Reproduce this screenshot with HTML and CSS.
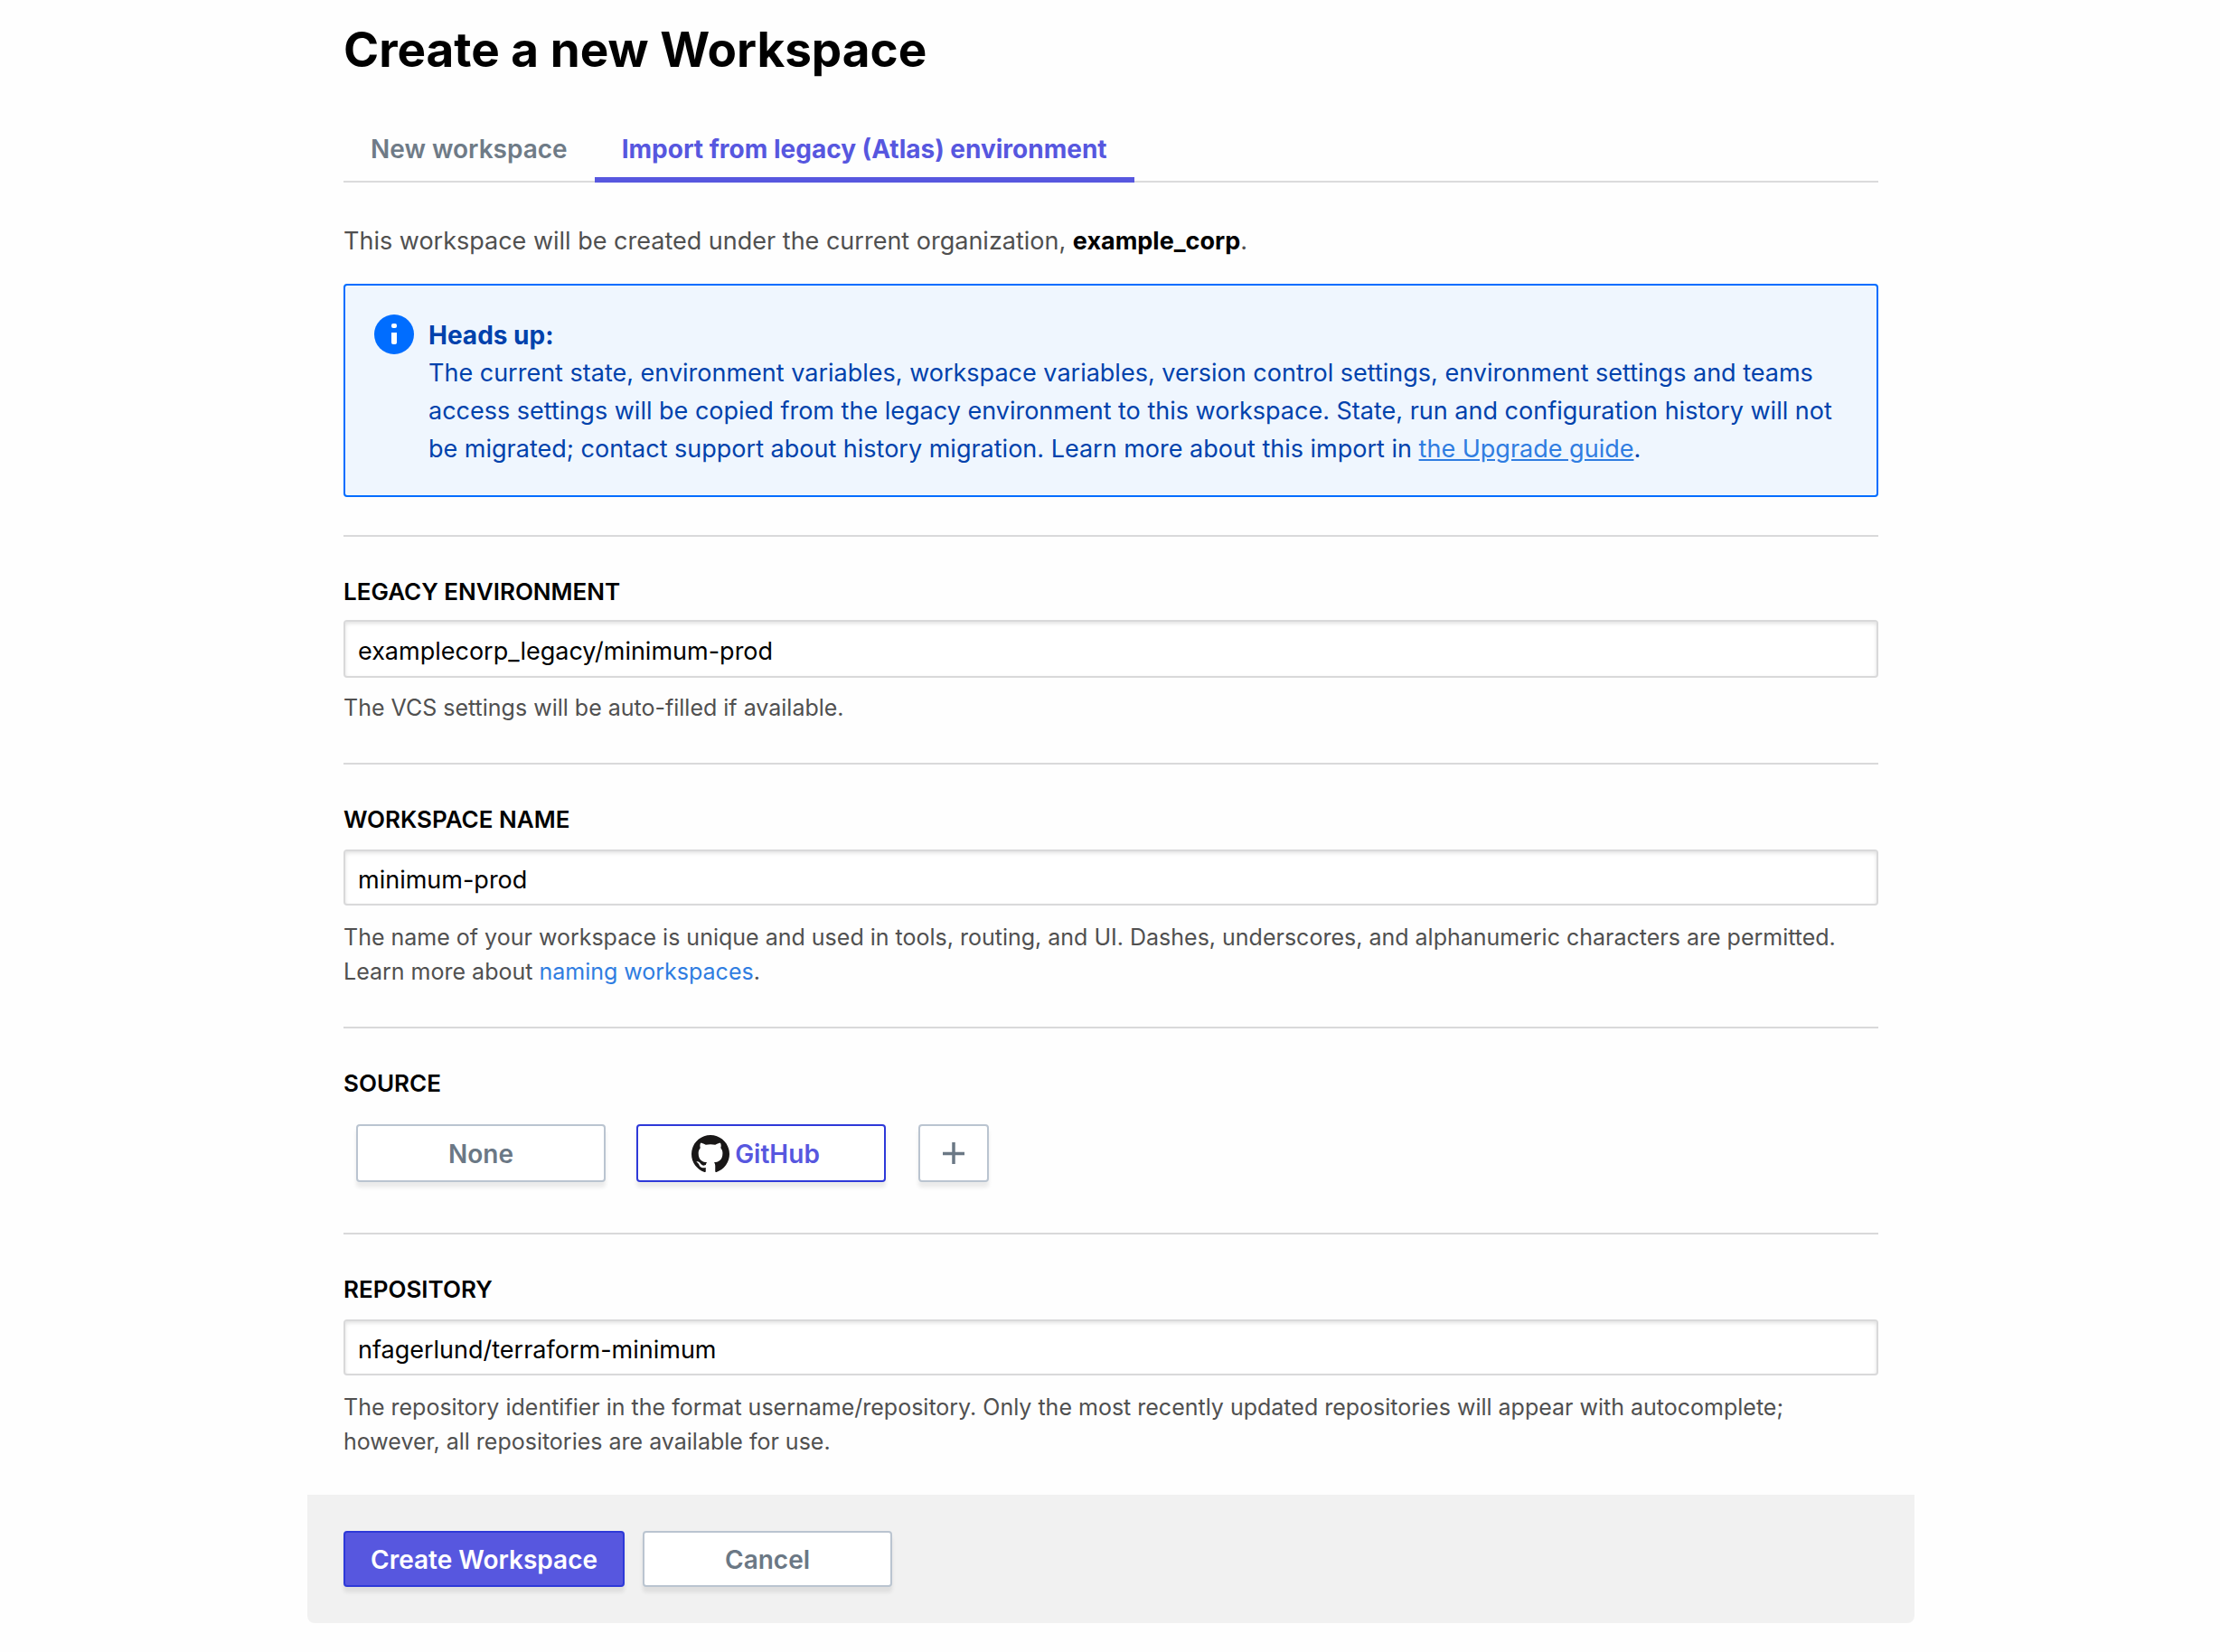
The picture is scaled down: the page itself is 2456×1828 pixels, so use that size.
FILE: index.html
```html
<!DOCTYPE html>
<html lang="en">
<head>
<meta charset="utf-8">
<meta name="viewport" content="width=device-width, initial-scale=1">
<title>Create a new Workspace</title>
<link rel="stylesheet" href="styles.css">
</head>
<body>
<main class="page">
  <h1 class="title">Create a new Workspace</h1>
  <nav class="tabs">
    <a class="tab" href="#new">New workspace</a>
    <a class="tab tab-active" href="#import" aria-current="page">Import from legacy (Atlas) environment</a>
  </nav>
  <p class="intro">This workspace will be created under the current organization, <strong class="org">example_corp</strong>.</p>
  <div class="alert">
    <svg class="alert-icon" viewBox="0 0 44 44" aria-hidden="true">
      <circle cx="22" cy="22" r="22" fill="#006dff"/>
      <rect x="19" y="10" width="6" height="5" rx="2" fill="#fff"/>
      <path d="M19 20h6v11a2 2 0 0 1-2 2h-2a2 2 0 0 1-2-2z" fill="#fff"/>
    </svg>
    <div class="alert-body">
      <strong class="alert-title">Heads up:</strong>
      <p class="alert-text">The current state, environment variables, workspace variables, version control settings, environment settings and teams access settings will be copied from the legacy environment to this workspace. State, run and configuration history will not be migrated; contact support about history migration. Learn more about this import in <a class="link link-underlined" href="#guide">the Upgrade guide</a>.</p>
    </div>
  </div>
  <form class="form">
    <div class="field field-first">
      <label class="label" for="legacy">LEGACY ENVIRONMENT</label>
      <input class="input input-tall" id="legacy" type="text" value="examplecorp_legacy/minimum-prod">
      <p class="help">The VCS settings will be auto-filled if available.</p>
    </div>
    <div class="field">
      <label class="label" for="name">WORKSPACE NAME</label>
      <input class="input" id="name" type="text" value="minimum-prod">
      <p class="help">The name of your workspace is unique and used in tools, routing, and UI. Dashes, underscores, and alphanumeric characters are permitted. Learn more about <a class="link" href="#naming">naming workspaces</a>.</p>
    </div>
    <div class="field field-source" role="group" aria-labelledby="source">
      <span class="label" id="source">SOURCE</span>
      <div class="sources">
        <button class="button button-source" type="button">None</button>
        <button class="button button-source button-selected" type="button">
          <svg class="github" viewBox="0 0 16 16" aria-hidden="true"><path fill="#191717" d="M8 0C3.58 0 0 3.58 0 8c0 3.54 2.29 6.53 5.47 7.59.4.07.55-.17.55-.38 0-.19-.01-.82-.01-1.49-2.01.37-2.53-.49-2.69-.94-.09-.23-.48-.94-.82-1.13-.28-.15-.68-.52-.01-.53.63-.01 1.08.58 1.23.82.72 1.21 1.87.87 2.33.66.07-.52.28-.87.51-1.07-1.78-.2-3.64-.89-3.64-3.95 0-.87.31-1.59.82-2.15-.08-.2-.36-1.02.08-2.12 0 0 .67-.21 2.2.82.64-.18 1.32-.27 2-.27s1.36.09 2 .27c1.53-1.04 2.2-.82 2.2-.82.44 1.1.16 1.92.08 2.12.51.56.82 1.27.82 2.15 0 3.07-1.87 3.75-3.65 3.95.29.25.54.73.54 1.48 0 1.07-.01 1.93-.01 2.2 0 .21.15.46.55.38A8.01 8.01 0 0 0 16 8c0-4.42-3.58-8-8-8z"/></svg>
          GitHub
        </button>
        <button class="button button-add" type="button" aria-label="Add source">
          <svg class="plus" viewBox="0 0 24 24" aria-hidden="true"><path d="M12 0v24M0 12.5h24" stroke="#6b7885" stroke-width="3.5"/></svg>
        </button>
      </div>
    </div>
    <div class="field field-last">
      <label class="label" for="repo">REPOSITORY</label>
      <input class="input" id="repo" type="text" value="nfagerlund/terraform-minimum">
      <p class="help">The repository identifier in the format username/repository. Only the most recently updated repositories will appear with autocomplete; however, all repositories are available for use.</p>
    </div>
    <div class="actions">
      <button class="button button-primary" type="submit">Create Workspace</button>
      <button class="button button-cancel" type="button">Cancel</button>
    </div>
  </form>
</main>
</body>
</html>
```
FILE: styles.css
```css
* {
  box-sizing: border-box;
}

body {
  margin: 0;
  padding-left: 2px;
  background: #fefefe;
  color: #000;
  font-family: Inter, "Liberation Sans", sans-serif;
  font-size: 27px;
  line-height: 42px;
}

.page {
  max-width: 1778px;
  margin: 0 auto;
  padding: 20px 40px 32px;
}

.title {
  margin: 0;
  font-size: 53px;
  font-weight: 700;
  line-height: 70px;
}

.tabs {
  display: flex;
  margin-top: 40px;
  box-shadow: inset 0 -2px #dbdbdc;
}

.tab {
  padding: 14px 30px 10px;
  border-bottom: 6px solid transparent;
  color: #6f7b87;
  font-size: 28px;
  font-weight: 600;
  text-decoration: none;
}

.tab-active {
  border-color: #5757df;
  color: #5757df;
  font-weight: 700;
}

.intro {
  margin: 44px 0 26px;
  color: #505050;
}

.org {
  color: #000;
  font-weight: 700;
}

.alert {
  display: flex;
  gap: 16px;
  padding: 32px 32px 30px;
  border: 2px solid #006dff;
  border-radius: 4px;
  background: #eff6fe;
  color: #0042ac;
}

.alert-icon {
  flex: none;
  width: 44px;
  height: 44px;
}

.alert-body {
  padding-top: 2px;
}

.alert-title {
  display: block;
  font-size: 28px;
  font-weight: 700;
}

.alert-text {
  margin: 0;
}

.link {
  color: #2f7de1;
  text-decoration: none;
}

.link-underlined {
  text-decoration: underline;
}

.field {
  padding: 42px 0;
  border-top: 2px solid #d9d9da;
}

.field-first {
  margin-top: 42px;
}

.field-source {
  padding-bottom: 56px;
}

.field-last {
  padding-bottom: 40px;
}

.label {
  display: block;
  font-size: 26px;
  font-weight: 600;
  line-height: 38px;
}

.input {
  display: block;
  width: 100%;
  height: 62px;
  margin: 14px 0 16px;
  padding: 4px 14px 0;
  border: 2px solid #d9d9da;
  border-radius: 4px;
  background: #fff;
  box-shadow: inset 0 2px 4px rgba(0, 0, 0, 0.12);
  color: #000;
  font: inherit;
}

.input-tall {
  height: 64px;
  margin: 12px 0 14px;
}

.help {
  margin: 0;
  color: #505050;
  font-size: 25px;
  line-height: 38px;
}

.sources {
  display: flex;
  margin-top: 26px;
  padding-left: 14px;
  gap: 34px;
}

.button {
  display: flex;
  align-items: center;
  justify-content: center;
  height: 62px;
  padding: 2px 28px 0;
  border: 2px solid #bac4d0;
  border-radius: 4px;
  background: #fff;
  box-shadow: 0 6px 4px rgba(0, 0, 0, 0.08);
  color: #6b7885;
  font: inherit;
  font-size: 28px;
  font-weight: 600;
}

.button-source {
  width: 276px;
  height: 64px;
  gap: 6px;
}

.button-selected {
  padding-right: 40px;
  border-color: #2e39d8;
  color: #5757df;
}

.button-add {
  width: 78px;
  height: 64px;
  margin-left: 2px;
  padding: 0;
}

.github {
  width: 42px;
  height: 42px;
}

.plus {
  width: 24px;
  height: 24px;
}

.actions {
  display: flex;
  gap: 20px;
  margin: 0 -40px;
  padding: 40px;
  border-radius: 0 0 8px 8px;
  background: #f1f1f1;
}

.button-primary {
  border-color: #2e39d8;
  background: #5757df;
  color: #fff;
}

.button-cancel {
  width: 276px;
}
```
